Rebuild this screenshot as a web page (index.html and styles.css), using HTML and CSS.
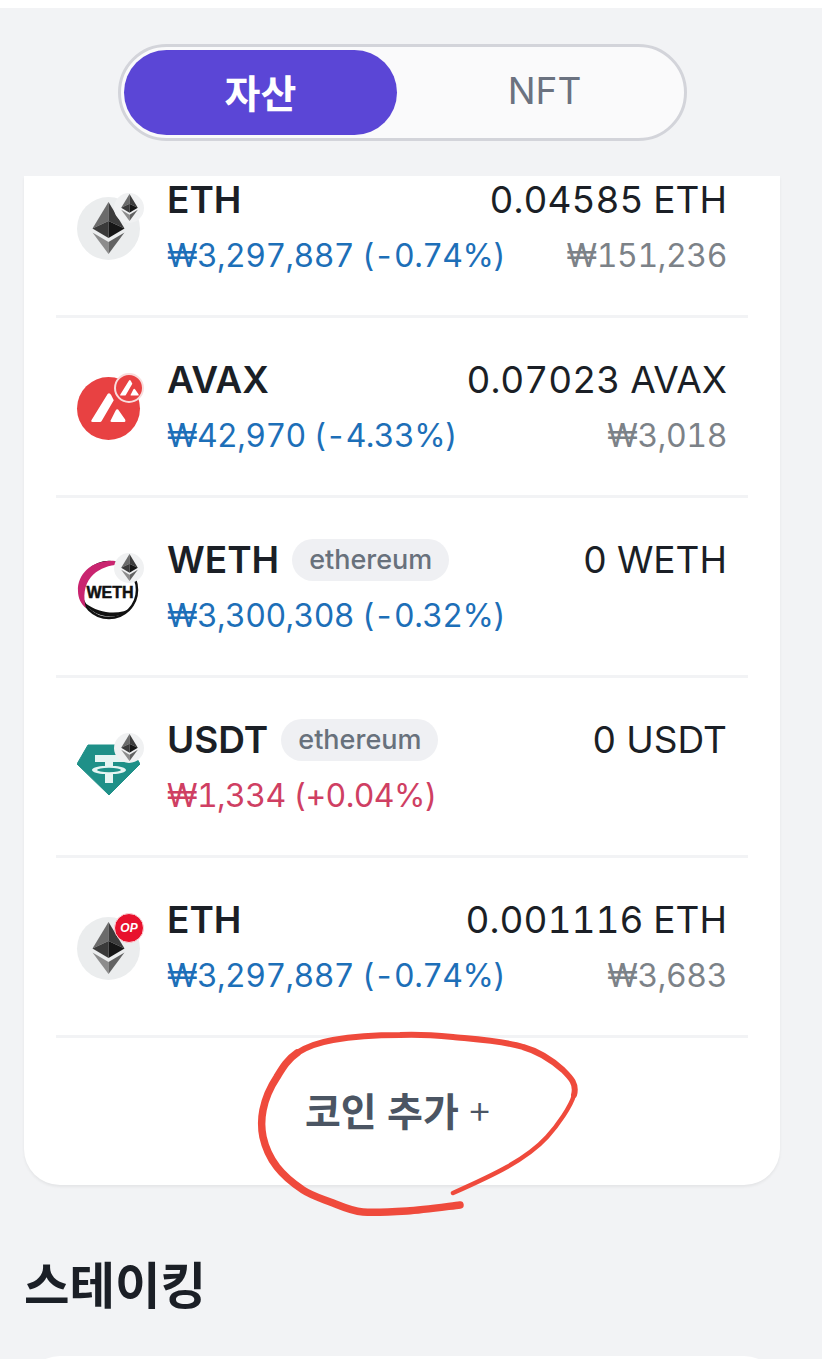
FILE: index.html
```html
<!DOCTYPE html>
<html lang="ko">
<head>
    <meta charset="UTF-8">
    <meta name="viewport" content="width=device-width, initial-scale=1.0">
    <title>자산</title>
    <link rel="stylesheet" href="styles.css">
</head>
<body>
    <svg class="defs" width="0" height="0">
        <symbol id="eth" viewBox="0 0 32 52">
            <path d="M16 0 L0 26.5 L16 19 Z" fill="#6b6b6b"/>
            <path d="M16 0 L32 26.5 L16 19 Z" fill="#3c3c3c"/>
            <path d="M0 26.5 L16 19 L16 36 Z" fill="#3a3a3a"/>
            <path d="M32 26.5 L16 19 L16 36 Z" fill="#161616"/>
            <path d="M0 30.5 L16 40 L16 52 Z" fill="#8c8c8c"/>
            <path d="M32 30.5 L16 40 L16 52 Z" fill="#626262"/>
        </symbol>
    </svg>

    <div class="page">
        <div class="top-band"></div>
        <div class="toggle-wrap">
            <div class="toggle">
                <div class="toggle-item active">자산</div>
                <div class="toggle-item">NFT</div>
            </div>
        </div>

        <div class="card">
            <div class="list">
                <div class="row">
                    <div class="coin">
                        <div class="coin-circle grey"><svg class="eth-big"><use href="#eth"/></svg></div>
                        <div class="badge grey"><svg class="eth-small"><use href="#eth"/></svg></div>
                    </div>
                    <div class="info">
                        <div class="line">
                            <div class="name">ETH</div>
                            <div class="amount">0.04585 ETH</div>
                        </div>
                        <div class="line">
                            <div class="price down">₩3,297,887 (-0.74%)</div>
                            <div class="value">₩151,236</div>
                        </div>
                    </div>
                </div>

                <div class="row">
                    <div class="coin">
                        <div class="coin-circle red">
                            <svg class="avax-big" viewBox="0 0 40 34"><path d="M19 1 Q21 -1 23 2 L26 8 L12 32 Q11 33 9 33 L2 33 Q-1 33 1 30 Z M28 20 Q30 17 32 20 L39 30 Q40 33 38 33 L24 33 Q21 33 23 30 Z" fill="#fff"/></svg>
                        </div>
                        <div class="badge red-badge">
                            <svg class="avax-small" viewBox="0 0 40 34"><path d="M19 1 Q21 -1 23 2 L26 8 L12 32 Q11 33 9 33 L2 33 Q-1 33 1 30 Z M28 20 Q30 17 32 20 L39 30 Q40 33 38 33 L24 33 Q21 33 23 30 Z" fill="#fff"/></svg>
                        </div>
                    </div>
                    <div class="info">
                        <div class="line">
                            <div class="name">AVAX</div>
                            <div class="amount">0.07023 AVAX</div>
                        </div>
                        <div class="line">
                            <div class="price down">₩42,970 (-4.33%)</div>
                            <div class="value">₩3,018</div>
                        </div>
                    </div>
                </div>

                <div class="row">
                    <div class="coin">
                        <svg class="coin-svg" viewBox="0 0 63 63">
                            <circle cx="32" cy="33" r="28" fill="none" stroke="#111" stroke-width="2.5"/>
                            <path d="M38 4 C16 2 0 17 1 34 C1 41 4 47 9 51 C6 40 7 28 14 20 C20 13 29 9 38 8 Z" fill="#c9246f"/>
                            <path d="M8 46 C17 61 41 65 56 50 C44 58 24 58 8 46 Z" fill="#111"/>
                            <text class="weth-text" x="33" y="41" text-anchor="middle">WETH</text>
                        </svg>
                        <div class="badge grey"><svg class="eth-small"><use href="#eth"/></svg></div>
                    </div>
                    <div class="info">
                        <div class="line">
                            <div class="name-wrap">
                                <div class="name">WETH</div>
                                <div class="chip">ethereum</div>
                            </div>
                            <div class="amount">0 WETH</div>
                        </div>
                        <div class="line">
                            <div class="price down">₩3,300,308 (-0.32%)</div>
                        </div>
                    </div>
                </div>

                <div class="row">
                    <div class="coin">
                        <svg class="coin-svg" viewBox="0 0 63 63">
                            <path d="M11 8 L52 8 L63 27 L32 58 L0 27 Z" fill="#1f9088" stroke="#1f9088" stroke-linejoin="round"/>
                            <path d="M18 18 H47 V25 H36 V29 C43 29 49 31 49 33 C49 35 43 37 36 37 V46 H28 V37 C21 37 15 35 15 33 C15 31 21 29 28 29 V25 H18 Z" fill="#e6f5f3"/>
                            <ellipse cx="32" cy="33" rx="12" ry="2.2" fill="#1f9088"/>
                        </svg>
                        <div class="badge grey"><svg class="eth-small"><use href="#eth"/></svg></div>
                    </div>
                    <div class="info">
                        <div class="line">
                            <div class="name-wrap">
                                <div class="name">USDT</div>
                                <div class="chip">ethereum</div>
                            </div>
                            <div class="amount">0 USDT</div>
                        </div>
                        <div class="line">
                            <div class="price up">₩1,334 (+0.04%)</div>
                        </div>
                    </div>
                </div>

                <div class="row">
                    <div class="coin">
                        <div class="coin-circle grey"><svg class="eth-big"><use href="#eth"/></svg></div>
                        <div class="badge op-badge">OP</div>
                    </div>
                    <div class="info">
                        <div class="line">
                            <div class="name">ETH</div>
                            <div class="amount">0.001116 ETH</div>
                        </div>
                        <div class="line">
                            <div class="price down">₩3,297,887 (-0.74%)</div>
                            <div class="value">₩3,683</div>
                        </div>
                    </div>
                </div>
            </div>

            <div class="add-coin">코인 추가 <span class="plus">+</span></div>
        </div>

        <h2 class="section-title">스테이킹</h2>
        <div class="next-card"></div>

        <!-- 손으로 그린 빨간 동그라미 -->
        <svg class="scribble" viewBox="0 0 822 1359">
            <path class="thin" d="M453 1193 C462 1189 491 1176 507 1167 C523 1158 536 1149 547 1137 C558 1125 571 1106 574 1095"/>
            <path class="mid" d="M574 1095 C577 1084 571 1078 563 1070 C554 1062 541 1052 523 1047 C505 1041 473 1039 453 1037 C432 1035 420 1034 400 1035 C380 1035 350 1037 333 1040 C316 1043 306 1047 297 1053"/>
            <path class="thick" d="M297 1053 C288 1059 283 1067 277 1077 C271 1086 265 1100 263 1110 C261 1120 261 1127 263 1137 C265 1146 270 1158 277 1167 C284 1176 294 1184 303 1190 C312 1196 323 1199 333 1203 C343 1207 351 1211 363 1212 C375 1213 391 1212 407 1211 C423 1210 451 1206 460 1205"/>
        </svg>
    </div>
</body>
</html>
```

FILE: styles.css
```css
html, body {
    margin: 0;
    padding: 0;
    background-color: #f2f3f5;
}
body {
    font-family: Inter, "Noto Sans CJK KR", sans-serif;
    font-variant-numeric: tabular-nums;
    color: #1b1f26;
}
.defs {
    position: absolute;
}
.page {
    position: relative;
    width: 822px;
    height: 1359px;
    overflow: hidden;
}
.top-band {
    height: 8px;
    background-color: #fff;
}
.toggle-wrap {
    display: flex;
    justify-content: center;
    padding: 36px 17px 35px 0;
}
.toggle {
    display: flex;
    box-sizing: border-box;
    width: 569px;
    height: 97px;
    padding: 3px;
    background-color: #fafafb;
    border: 3px solid #d3d4da;
    border-radius: 49px;
}
.toggle-item {
    flex: 1;
    display: flex;
    align-items: center;
    justify-content: center;
    padding: 0 0 4px 11px;
    font-size: 37px;
    color: #6b7280;
    border-radius: 43px;
}
.toggle-item.active {
    flex: none;
    box-sizing: border-box;
    width: 273px;
    padding-left: 0;
    background-color: #5b46d6;
    color: #fff;
    font-size: 39px;
    font-weight: 700;
}
.card {
    width: 756px;
    height: 1009px;
    margin-left: 24px;
    background-color: #fff;
    border-radius: 0 0 36px 36px;
    box-shadow: 0 2px 3px rgba(0, 0, 0, 0.06);
    overflow: hidden;
}
.list {
    margin: -38px 32px 0;
}
.row {
    display: flex;
    align-items: center;
    gap: 27px;
    box-sizing: border-box;
    height: 180px;
    padding: 0 21px;
    border-bottom: 3px solid #f2f3f5;
}
.coin {
    position: relative;
    flex: none;
    width: 63px;
    height: 63px;
    margin-top: 3px;
}
.coin-circle {
    display: flex;
    align-items: center;
    justify-content: center;
    width: 63px;
    height: 63px;
    border-radius: 50%;
}
.coin-circle.grey {
    background-color: #ebedee;
}
.coin-circle.red {
    background-color: #e84142;
}
.coin-svg {
    display: block;
    width: 63px;
    height: 63px;
}
.eth-big {
    width: 33px;
    height: 52px;
}
.eth-small {
    width: 17px;
    height: 27px;
}
.avax-big {
    width: 35px;
    height: 32px;
}
.avax-small {
    width: 19px;
    height: 18px;
}
.badge {
    position: absolute;
    top: -4px;
    right: -4px;
    display: flex;
    align-items: center;
    justify-content: center;
    box-sizing: border-box;
    width: 30px;
    height: 30px;
    border-radius: 50%;
}
.badge.grey {
    background-color: #f0f1f2;
}
.badge.red-badge {
    background-color: #e84142;
    border: 2px solid #f9dcdc;
}
.badge.op-badge {
    background-color: #e8112d;
    border: 1px solid #fbd5da;
    color: #fff;
    font-family: "Liberation Sans", sans-serif;
    font-size: 12px;
    font-weight: 700;
    font-style: italic;
}
.weth-text {
    font-family: "Liberation Sans", sans-serif;
    font-size: 16px;
    font-weight: 700;
    fill: #111;
    stroke: #111;
    stroke-width: 0.5px;
}
.info {
    flex: 1;
    min-width: 0;
    margin-top: 4px;
}
.line {
    display: flex;
    align-items: center;
    justify-content: space-between;
    height: 56px;
}
.name-wrap {
    display: flex;
    align-items: center;
    gap: 13px;
}
.name {
    font-size: 37px;
    line-height: 1.2;
    font-weight: 600;
}
.amount {
    font-size: 37px;
    line-height: 1.2;
}
.price {
    font-size: 32px;
    line-height: 1.2;
    letter-spacing: -0.6px;
}
.price.down {
    color: #1d6fb8;
}
.price.up {
    color: #cf3f63;
}
.value {
    font-size: 32px;
    line-height: 1.2;
    letter-spacing: -0.4px;
    color: #7c8288;
}
.chip {
    padding: 0 17px;
    height: 42px;
    line-height: 42px;
    border-radius: 21px;
    background-color: #eff0f3;
    color: #68717c;
    font-size: 27px;
    font-weight: 500;
}
.add-coin {
    display: flex;
    align-items: center;
    justify-content: center;
    gap: 8px;
    height: 147px;
    padding: 0 7px 6px 0;
    box-sizing: border-box;
    font-size: 39px;
    font-weight: 600;
    color: #4b5563;
}
.plus {
    font-weight: 300;
}
.section-title {
    margin: 66px 0 0 24px;
    font-size: 49.5px;
    line-height: 70px;
    font-weight: 700;
}
.next-card {
    width: 756px;
    height: 40px;
    margin: 35px 0 0 24px;
    background-color: #fff;
    border-radius: 36px 36px 0 0;
}
.scribble {
    position: absolute;
    top: 0;
    left: 0;
    width: 822px;
    height: 1359px;
    fill: none;
    pointer-events: none;
}
.scribble path {
    stroke: #ef4a3c;
    stroke-linecap: round;
}
.scribble .thin {
    stroke-width: 4.5px;
}
.scribble .mid {
    stroke-width: 6px;
}
.scribble .thick {
    stroke-width: 7.5px;
}
```
